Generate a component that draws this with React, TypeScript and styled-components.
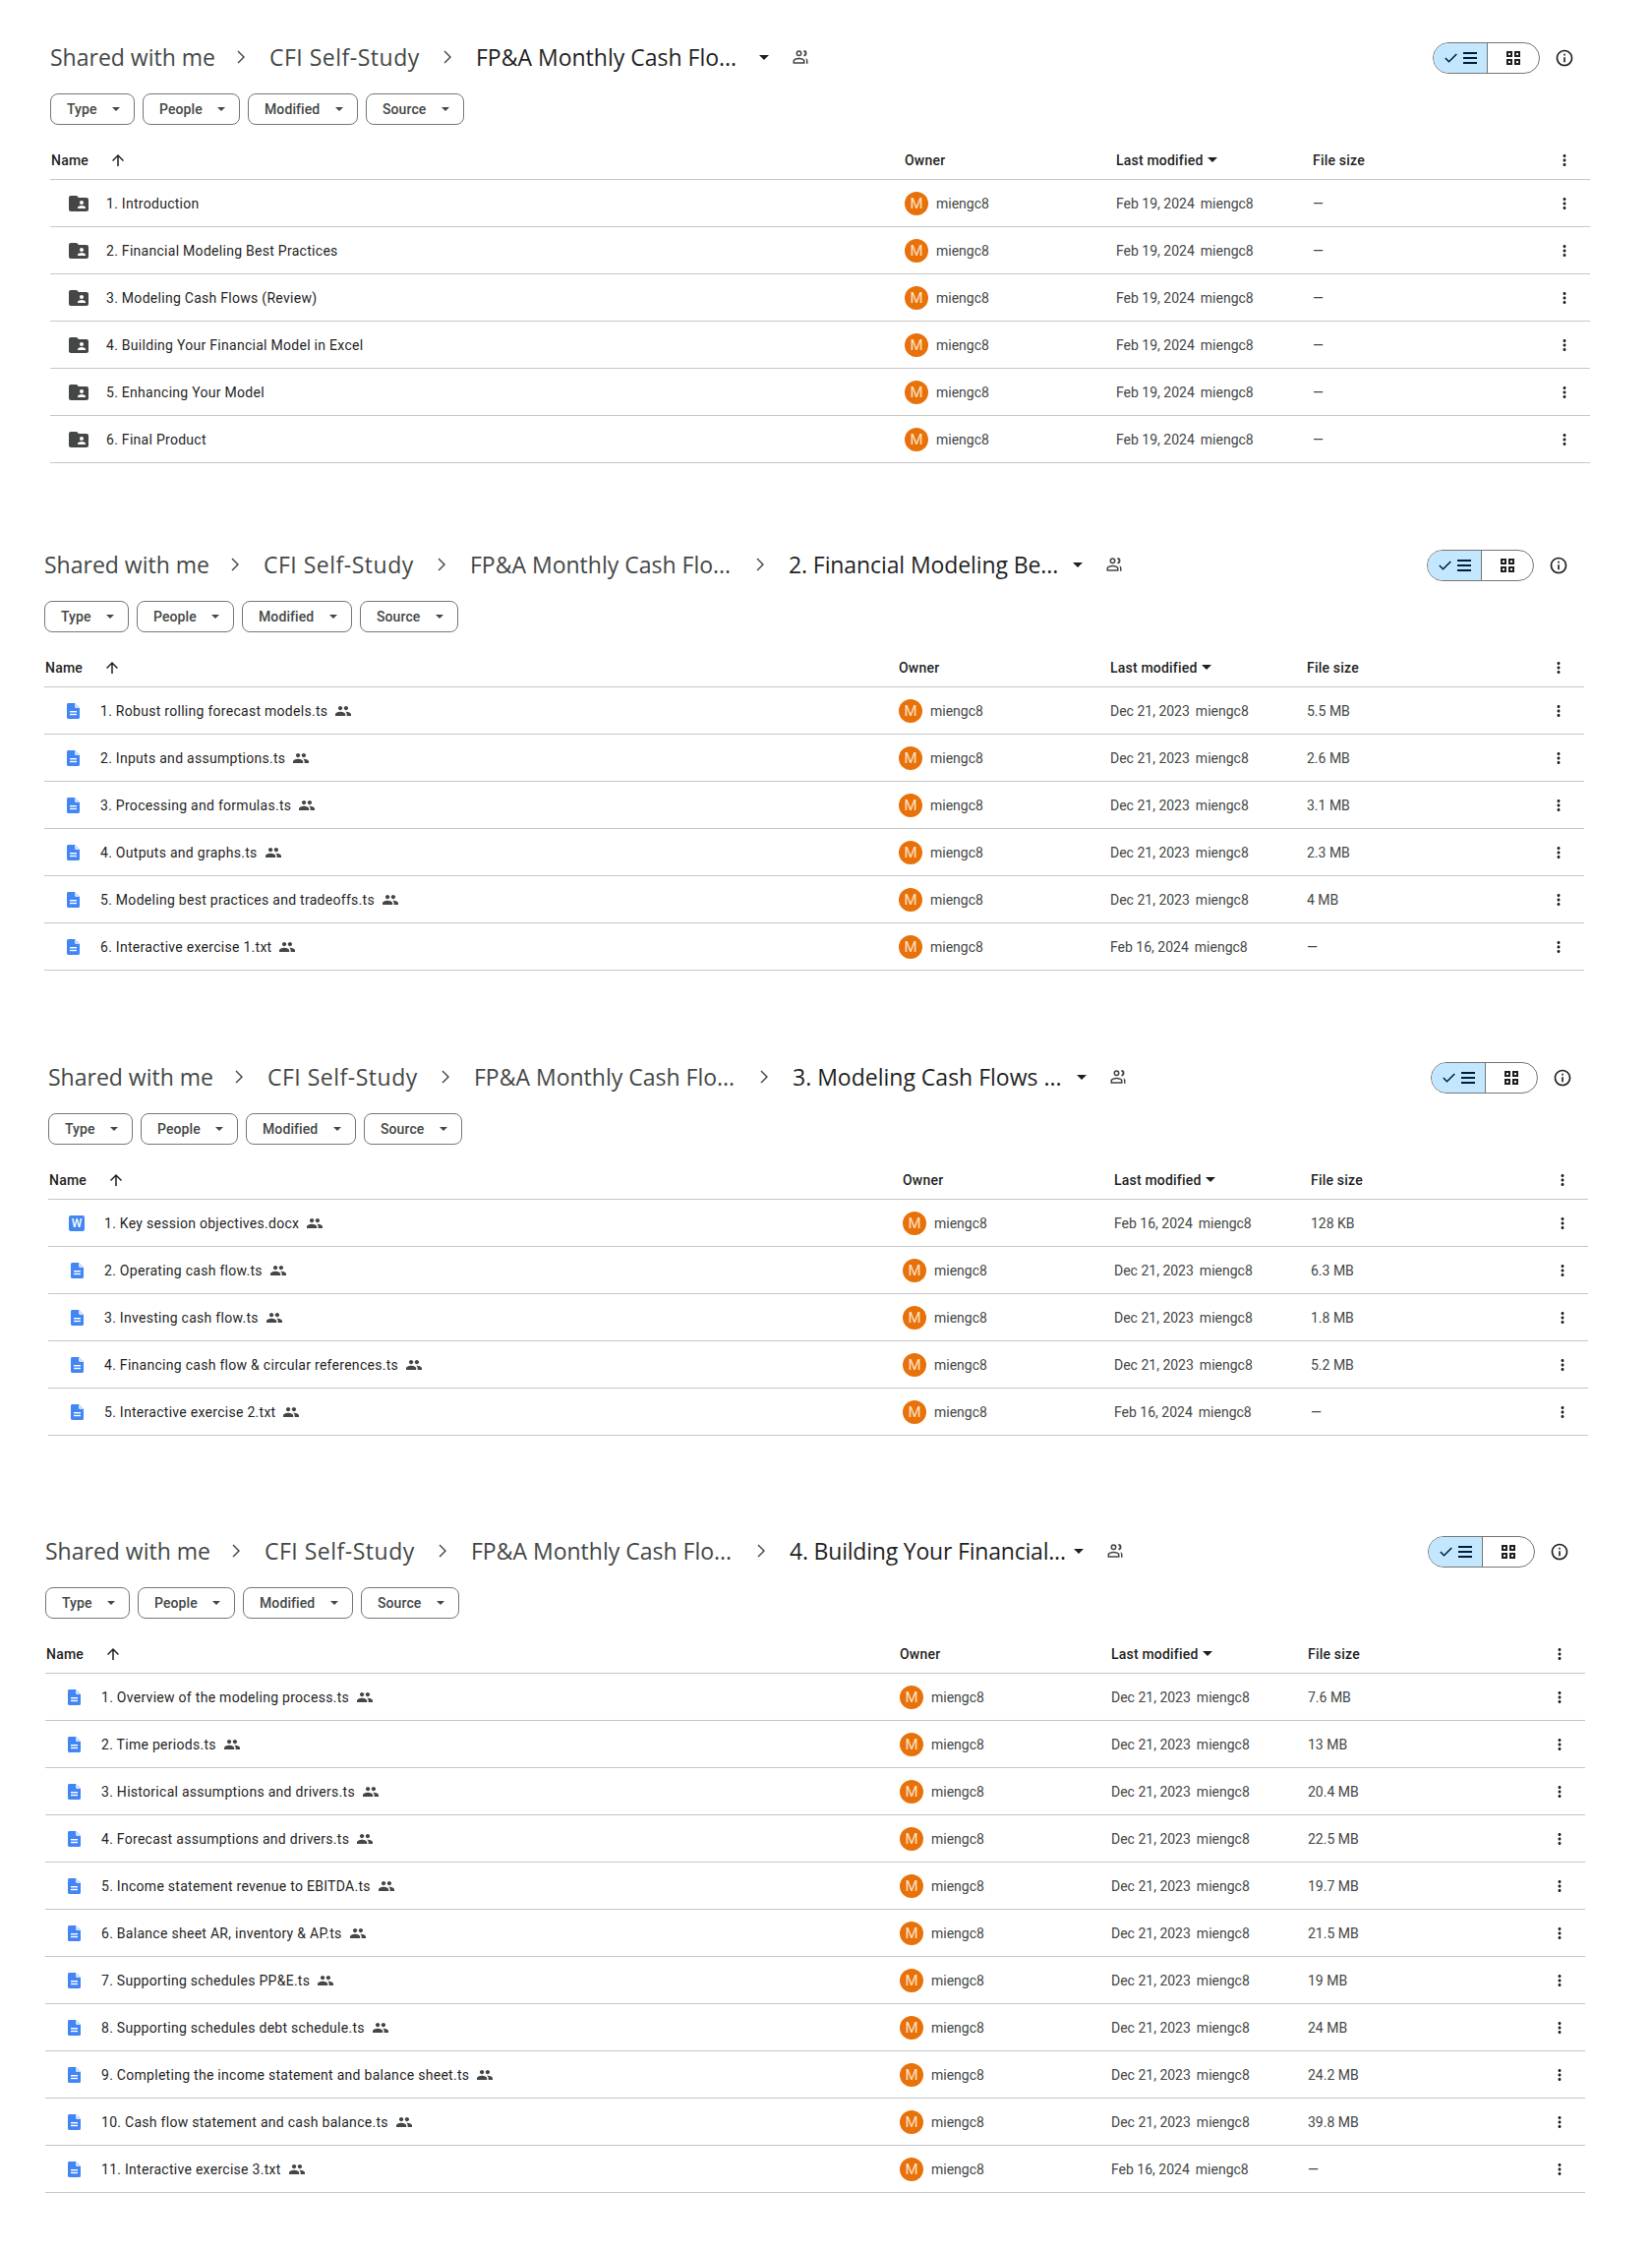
import styled, { createGlobalStyle } from 'styled-components'

const GlobalStyle = createGlobalStyle`
    html, body {
        margin: 0;
        padding: 0;
        background: #fff;
        font-family: Roboto, "Noto Sans", Arial, sans-serif;
    }
`

const Page = styled.div`
    width: 1680px;
    min-height: 2288px;
    padding-top: 34px;
    box-sizing: border-box;
    overflow: hidden;
`
const Section = styled.section<{ $left: number; $gap: number }>`
    width: 1566px;
    margin-left: ${(p) => p.$left}px;
    margin-top: ${(p) => p.$gap}px;
`
const TitleBar = styled.div`
    display: flex;
    align-items: center;
    justify-content: space-between;
    height: 48px;
`
const Crumbs = styled.div`
    display: flex;
    align-items: center;
`
const Crumb = styled.span<{ $current?: boolean; $width: number; $tracking?: number }>`
    width: ${(p) => p.$width}px;
    font-family: "Open Sans", Roboto, sans-serif;
    font-size: 23px;
    letter-spacing: ${(p) => p.$tracking ?? 0}px;
    white-space: nowrap;
    color: ${(p) => (p.$current ? '#1f1f1f' : '#444746')};
`
const CrumbArrow = styled.svg`
    width: 24px;
    height: 24px;
    margin: 0 16px;
    fill: #444746;
`
const CrumbCaret = styled.span`
    width: 0;
    height: 0;
    margin-left: 20px;
    border-left: 5px solid transparent;
    border-right: 5px solid transparent;
    border-top: 5px solid #1f1f1f;
`
const SharedOutline = styled.svg`
    width: 18px;
    height: 18px;
    margin-left: 23px;
    fill: #444746;
`
const ViewTools = styled.div`
    display: flex;
    align-items: center;
    margin-top: 1px;
    margin-right: 14px;
`
const Toggle = styled.div`
    display: flex;
    width: 109px;
    height: 32px;
    box-sizing: border-box;
    border: 1px solid #747775;
    border-radius: 16px;
    overflow: hidden;
`
const ToggleList = styled.div`
    display: flex;
    align-items: center;
    gap: 6px;
    width: 55px;
    padding-left: 11px;
    box-sizing: border-box;
    background: #c2e7ff;
    border-right: 1px solid #747775;
`
const ToggleGrid = styled.div`
    display: flex;
    align-items: center;
    justify-content: center;
    flex: 1;
`
const ToolIcon = styled.svg<{ $size?: number; $color?: string }>`
    display: block;
    flex: none;
    width: ${(p) => p.$size ?? 18}px;
    height: ${(p) => p.$size ?? 18}px;
    fill: ${(p) => p.$color ?? '#1f1f1f'};
`
const InfoButton = styled.div`
    display: flex;
    align-items: center;
    justify-content: center;
    width: 24px;
    height: 24px;
    margin-left: 13px;
`
const Chips = styled.div`
    display: flex;
    gap: 8px;
    margin-top: 13px;
`
const Chip = styled.div<{ $width: number }>`
    display: flex;
    align-items: center;
    justify-content: space-between;
    width: ${(p) => p.$width}px;
    height: 32px;
    padding: 0 14px 0 16px;
    box-sizing: border-box;
    border: 1px solid #747775;
    border-radius: 8px;
    font-size: 14px;
    font-weight: 500;
    letter-spacing: 0.1px;
    color: #444746;
`
const ChipCaret = styled.span`
    width: 0;
    height: 0;
    border-left: 4px solid transparent;
    border-right: 4px solid transparent;
    border-top: 4px solid #444746;
`
const Row = styled.div<{ $head?: boolean }>`
    display: grid;
    grid-template-columns: 869px 215px 200px 230px 52px;
    align-items: center;
    height: 48px;
    box-sizing: border-box;
    border-bottom: 1px solid #c7c7c7;
    font-size: 14px;
    color: ${(p) => (p.$head ? '#1f1f1f' : '#444746')};
    font-weight: ${(p) => (p.$head ? 500 : 400)};
`
const HeadRow = styled(Row)`
    margin-top: 8px;
    padding-top: 8px;
    letter-spacing: 0.2px;
`
const NameHead = styled.div`
    display: flex;
    align-items: center;
    gap: 21px;
    padding-left: 1px;
`
const ModifiedHead = styled.div`
    display: flex;
    align-items: center;
    gap: 4px;
`
const HeadCaret = styled.span`
    width: 0;
    height: 0;
    border-left: 5px solid transparent;
    border-right: 5px solid transparent;
    border-top: 5px solid #1f1f1f;
`
const NameCell = styled.div`
    display: flex;
    align-items: center;
    padding-left: 19px;
`
const IconSlot = styled.div`
    display: flex;
    align-items: center;
    justify-content: center;
    width: 20px;
    margin-right: 18px;
`
const FileName = styled.span`
    color: #1f1f1f;
    letter-spacing: 0.28px;
    white-space: nowrap;
`
const SharedMark = styled.svg`
    width: 16px;
    height: 16px;
    margin-left: 8px;
    fill: #444746;
`
const DocMark = styled.svg`
    display: block;
    width: 13px;
    height: 16px;
`
const WordIcon = styled.div`
    display: flex;
    align-items: center;
    justify-content: center;
    width: 16px;
    height: 16px;
    border-radius: 2px;
    background: #4285f4;
    color: #fff;
    font-size: 12px;
    font-weight: 500;
`
const OwnerCell = styled.div`
    display: flex;
    align-items: center;
    gap: 8px;
`
const Avatar = styled.div`
    display: flex;
    align-items: center;
    justify-content: center;
    width: 24px;
    height: 24px;
    border-radius: 50%;
    background: #e8710a;
    color: #fde3c8;
    font-size: 15px;
`
const ModifiedCell = styled.div`
    display: flex;
    gap: 6px;
`
const MoreCell = styled.div`
    display: flex;
    justify-content: center;
`

const peoplePath =
    'M16 11c1.66 0 2.99-1.34 2.99-3S17.66 5 16 5c-1.66 0-3 1.34-3 3s1.34 3 3 3zm-8 0c1.66 0 2.99-1.34 2.99-3S9.66 5 8 5C6.34 5 5 6.34 5 8s1.34 3 3 3zm0 2c-2.33 0-7 1.17-7 3.5V19h14v-2.5c0-2.33-4.67-3.5-7-3.5zm8 0c-.29 0-.62.02-.97.05 1.16.84 1.97 1.97 1.97 3.45V19h6v-2.5c0-2.33-4.67-3.5-7-3.5z'

const MoreIcon = () => (
    <ToolIcon viewBox="0 0 24 24" $size={18}>
        <path d="M12 8c1.1 0 2-.9 2-2s-.9-2-2-2-2 .9-2 2 .9 2 2 2zm0 2c-1.1 0-2 .9-2 2s.9 2 2 2 2-.9 2-2-.9-2-2-2zm0 6c-1.1 0-2 .9-2 2s.9 2 2 2 2-.9 2-2-.9-2-2-2z" />
    </ToolIcon>
)

const FolderIcon = () => (
    <ToolIcon viewBox="2 4 20 16" $size={20} $color="#444746">
        <path d="M20 6h-8l-2-2H4c-1.1 0-1.99.9-1.99 2L2 18c0 1.1.9 2 2 2h16c1.1 0 2-.9 2-2V8c0-1.1-.9-2-2-2zm-5 3c1.1 0 2 .9 2 2s-.9 2-2 2-2-.9-2-2 .9-2 2-2zm4 8h-8v-1c0-1.33 2.67-2 4-2s4 .67 4 2v1z" />
    </ToolIcon>
)

const DocIcon = () => (
    <DocMark viewBox="0 0 13 16">
        <path d="M1.500 0H8L13 5V14.500c0 .8-.7 1.500-1.500 1.500h-10C.7 16 0 15.300 0 14.500v-13C0 .7.700 0 1.500 0z" fill="#4285f4" />
        <path d="M8 0v3.800C8 4.500 8.500 5 9.200 5H13z" fill="#d2e3fc" />
        <rect x="3" y="8" width="7" height="1.400" fill="#fff" />
        <rect x="3" y="10.800" width="7" height="1.400" fill="#fff" />
    </DocMark>
)

type FileRow = {
    name: string
    kind: 'folder' | 'doc' | 'word'
    date: string
    size: string
}

type Block = {
    left: number
    gap: number
    current?: string
    tracking?: number
    rows: FileRow[]
}

const doc = (name: string, date: string, size: string): FileRow => ({ name, kind: 'doc', date, size })
const folder = (name: string): FileRow => ({ name, kind: 'folder', date: 'Feb 19, 2024', size: '—' })

const DEC = 'Dec 21, 2023'
const FEB = 'Feb 16, 2024'

const blocks: Block[] = [
    {
        left: 51,
        gap: 0,
        rows: [
            folder('1. Introduction'),
            folder('2. Financial Modeling Best Practices'),
            folder('3. Modeling Cash Flows (Review)'),
            folder('4. Building Your Financial Model in Excel'),
            folder('5. Enhancing Your Model'),
            folder('6. Final Product'),
        ],
    },
    {
        left: 45,
        gap: 79,
        current: '2. Financial Modeling Be...',
        tracking: -0.1,
        rows: [
            doc('1. Robust rolling forecast models.ts', DEC, '5.5 MB'),
            doc('2. Inputs and assumptions.ts', DEC, '2.6 MB'),
            doc('3. Processing and formulas.ts', DEC, '3.1 MB'),
            doc('4. Outputs and graphs.ts', DEC, '2.3 MB'),
            doc('5. Modeling best practices and tradeoffs.ts', DEC, '4 MB'),
            doc('6. Interactive exercise 1.txt', FEB, '—'),
        ],
    },
    {
        left: 49,
        gap: 84,
        current: '3. Modeling Cash Flows ...',
        rows: [
            { name: '1. Key session objectives.docx', kind: 'word', date: FEB, size: '128 KB' },
            doc('2. Operating cash flow.ts', DEC, '6.3 MB'),
            doc('3. Investing cash flow.ts', DEC, '1.8 MB'),
            doc('4. Financing cash flow & circular references.ts', DEC, '5.2 MB'),
            doc('5. Interactive exercise 2.txt', FEB, '—'),
        ],
    },
    {
        left: 46,
        gap: 93,
        current: '4. Building Your Financial...',
        tracking: -0.2,
        rows: [
            doc('1. Overview of the modeling process.ts', DEC, '7.6 MB'),
            doc('2. Time periods.ts', DEC, '13 MB'),
            doc('3. Historical assumptions and drivers.ts', DEC, '20.4 MB'),
            doc('4. Forecast assumptions and drivers.ts', DEC, '22.5 MB'),
            doc('5. Income statement revenue to EBITDA.ts', DEC, '19.7 MB'),
            doc('6. Balance sheet AR, inventory & AP.ts', DEC, '21.5 MB'),
            doc('7. Supporting schedules PP&E.ts', DEC, '19 MB'),
            doc('8. Supporting schedules debt schedule.ts', DEC, '24 MB'),
            doc('9. Completing the income statement and balance sheet.ts', DEC, '24.2 MB'),
            doc('10. Cash flow statement and cash balance.ts', DEC, '39.8 MB'),
            doc('11. Interactive exercise 3.txt', FEB, '—'),
        ],
    },
]

const chips = [
    { label: 'Type', width: 86 },
    { label: 'People', width: 99 },
    { label: 'Modified', width: 112 },
    { label: 'Source', width: 100 },
]

const Arrow = () => (
    <CrumbArrow viewBox="0 0 24 24">
        <path d="M8.500 5.500l6.500 6.500-6.500 6.500-1-1 5.500-5.500-5.500-5.500z" />
    </CrumbArrow>
)

const App = () => {
    return (
        <Page>
            <GlobalStyle />
            {blocks.map((block, index) => (
                <Section key={index} $left={block.left} $gap={block.gap}>
                    <TitleBar>
                        <Crumbs>
                            <Crumb $width={167}>Shared with me</Crumb>
                            <Arrow />
                            <Crumb $width={154} $tracking={0.5}>CFI Self-Study</Crumb>
                            <Arrow />
                            <Crumb $width={268} $current={!block.current}>FP&amp;A Monthly Cash Flo...</Crumb>
                            {block.current && (
                                <>
                                    <Arrow />
                                    <Crumb $width={269} $tracking={block.tracking} $current>{block.current}</Crumb>
                                </>
                            )}
                            <CrumbCaret />
                            <SharedOutline viewBox="0 0 24 24">
                                <path d="M10 3a4 4 0 1 0 0 8 4 4 0 0 0 0-8zm0 2a2 2 0 1 1 0 4 2 2 0 0 1 0-4zm6.500-2.200v2.100a2.100 2.100 0 0 1 0 4.100v2.100a4.100 4.100 0 0 0 0-8.300zM10 13c-3 0-8 1.300-8 4v4h16v-4c0-2.700-5-4-8-4zm0 2c2.700 0 6 1 6 2.500V19H4v-1.500C4 16 7.300 15 10 15zm8.500-1.800c1.300.800 1.500 2.300 1.500 3.800v4h2v-4c0-1.900-1.700-3.300-3.500-3.800z" />
                            </SharedOutline>
                        </Crumbs>
                        <ViewTools>
                            <Toggle>
                                <ToggleList>
                                    <svg viewBox="0 0 13 10" width="13" height="10" fill="none" stroke="#001d35" strokeWidth="1.500">
                                        <path d="M.8 5l3.700 3.700L12.300 1" />
                                    </svg>
                                    <ToolIcon viewBox="0 0 14 14" $size={14} $color="#001d35">
                                        <path d="M0 1h14v2H0zM0 6h14v2H0zM0 11h14v2H0z" />
                                    </ToolIcon>
                                </ToggleList>
                                <ToggleGrid>
                                    <ToolIcon viewBox="0 0 14 14" $size={14}>
                                        <path d="M0 0h6v6H0zm2 2v2h2V2zM8 0h6v6H8zm2 2v2h2V2zM0 8h6v6H0zm2 2v2h2v-2zM8 8h6v6H8zm2 2v2h2v-2z" fillRule="evenodd" />
                                    </ToolIcon>
                                </ToggleGrid>
                            </Toggle>
                            <InfoButton>
                                <ToolIcon viewBox="0 0 24 24" $size={20}>
                                    <path d="M11 7h2v2h-2zm0 4h2v6h-2zm1-9C6.480 2 2 6.480 2 12s4.480 10 10 10 10-4.480 10-10S17.520 2 12 2zm0 18c-4.410 0-8-3.590-8-8s3.590-8 8-8 8 3.590 8 8-3.590 8-8 8z" />
                                </ToolIcon>
                            </InfoButton>
                        </ViewTools>
                    </TitleBar>
                    <Chips>
                        {chips.map((chip) => (
                            <Chip key={chip.label} $width={chip.width}>
                                {chip.label}
                                <ChipCaret />
                            </Chip>
                        ))}
                    </Chips>
                    <HeadRow $head>
                        <NameHead>
                            Name
                            <ToolIcon viewBox="0 0 24 24" $size={18}>
                                <path d="M4 12l1.410 1.410L11 7.830V20h2V7.830l5.580 5.590L20 12l-8-8z" />
                            </ToolIcon>
                        </NameHead>
                        <div>Owner</div>
                        <ModifiedHead>
                            Last modified
                            <HeadCaret />
                        </ModifiedHead>
                        <div>File size</div>
                        <MoreCell>
                            <MoreIcon />
                        </MoreCell>
                    </HeadRow>
                    {block.rows.map((row) => (
                        <Row key={row.name}>
                            <NameCell>
                                <IconSlot>
                                    {row.kind === 'folder' && <FolderIcon />}
                                    {row.kind === 'doc' && <DocIcon />}
                                    {row.kind === 'word' && <WordIcon>W</WordIcon>}
                                </IconSlot>
                                <FileName>{row.name}</FileName>
                                {row.kind !== 'folder' && (
                                    <SharedMark viewBox="1 1 22 22">
                                        <path d={peoplePath} />
                                    </SharedMark>
                                )}
                            </NameCell>
                            <OwnerCell>
                                <Avatar>M</Avatar>
                                miengc8
                            </OwnerCell>
                            <ModifiedCell>
                                <span>{row.date}</span>
                                <span>miengc8</span>
                            </ModifiedCell>
                            <div>{row.size}</div>
                            <MoreCell>
                                <MoreIcon />
                            </MoreCell>
                        </Row>
                    ))}
                </Section>
            ))}
        </Page>
    )
}

export default App
